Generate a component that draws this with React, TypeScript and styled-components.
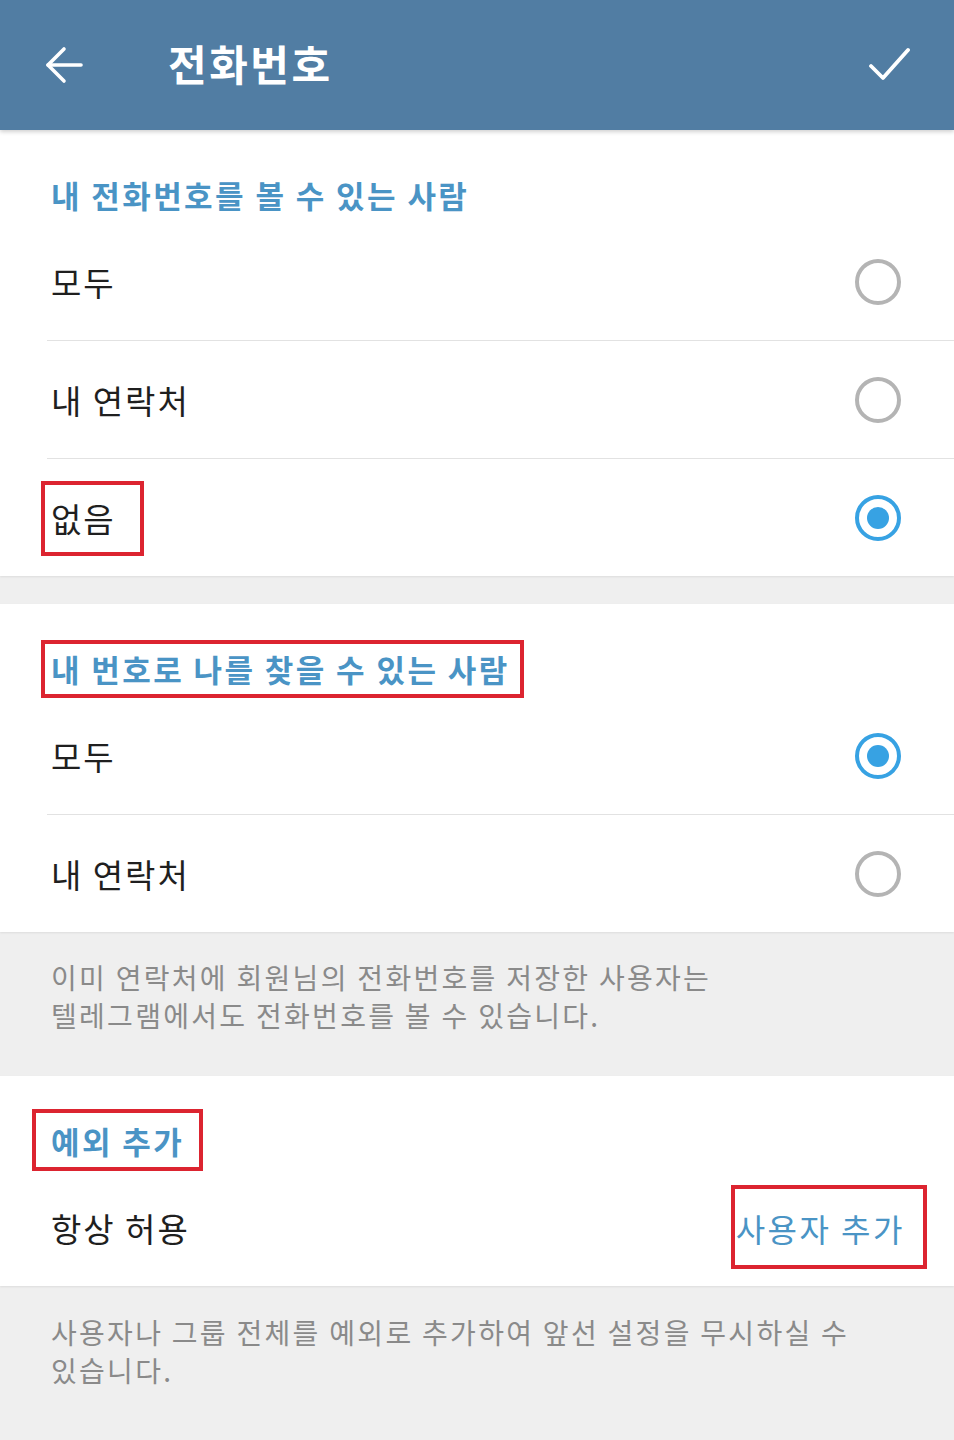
import React from "react";
import styled, { createGlobalStyle } from "styled-components";

const GlobalStyle = createGlobalStyle`
  html, body {
    margin: 0;
    padding: 0;
    background: #efefef;
  }
  body {
    font-family: "Noto Sans CJK KR", "Noto Sans", sans-serif;
  }
`;

const Page = styled.div`
  width: 954px;
  min-height: 1440px;
  background: #efefef;
  overflow: hidden;
`;

const TopBar = styled.header`
  height: 130px;
  background: #517da3;
  display: flex;
  align-items: center;
  padding: 0 44px 0 44px;
  box-sizing: border-box;
  box-shadow: 0 2px 4px rgba(0, 0, 0, 0.18);
  position: relative;
  z-index: 1;
`;

const Title = styled.h1`
  flex: 1;
  margin: 0 0 0 82px;
  color: #fff;
  font-size: 42px;
  font-weight: 700;
  letter-spacing: 2.5px;
  line-height: 1;
  padding-bottom: 4px;
`;

const IconButton = styled.span`
  display: flex;
  width: 42px;
  height: 42px;
`;

const Section = styled.section`
  background: #fff;
  box-shadow: 0 1px 2px rgba(0, 0, 0, 0.08);
`;

const SectionTitle = styled.div`
  padding: 43px 51px 6px;
  line-height: 44px;
  height: 44px;
  font-size: 31px;
  font-weight: 700;
  letter-spacing: 2.4px;
  color: #4a94c5;
`;

const Row = styled.div<{ $divider?: boolean }>`
  height: 117px;
  display: flex;
  align-items: center;
  justify-content: space-between;
  margin-left: 47px;
  padding: 0 53px 0 4px;
  border-bottom: ${(p) => (p.$divider ? "1px solid #e2e2e2" : "none")};
`;

const Label = styled.span`
  font-size: 33px;
  color: #1f1f1f;
  letter-spacing: 2px;
`;

const Action = styled.span`
  font-size: 32px;
  color: #4a94c5;
  letter-spacing: 2.5px;
  margin-right: -4px;
`;

const Radio = styled.span<{ $on?: boolean }>`
  width: 46px;
  height: 46px;
  box-sizing: border-box;
  border-radius: 50%;
  border: 4px solid ${(p) => (p.$on ? "#37a2e3" : "#b4b4b4")};
  display: flex;
  align-items: center;
  justify-content: center;
  &::after {
    content: "";
    width: 22px;
    height: 22px;
    border-radius: 50%;
    background: #37a2e3;
    display: ${(p) => (p.$on ? "block" : "none")};
  }
`;

const Gap = styled.div`
  height: 28px;
`;

const Info = styled.div<{ $pt: number; $pb: number }>`
  padding: ${(p) => p.$pt}px 51px ${(p) => p.$pb}px;
  font-size: 28px;
  line-height: 38px;
  color: #8a8a8a;
  letter-spacing: 2.3px;
`;

type Inset = [number, number, number, number];

const Marked = styled.span<{ $inset: Inset }>`
  position: relative;
  display: inline-block;
  &::after {
    content: "";
    position: absolute;
    top: ${(p) => -p.$inset[0]}px;
    right: ${(p) => -p.$inset[1]}px;
    bottom: ${(p) => -p.$inset[2]}px;
    left: ${(p) => -p.$inset[3]}px;
    border: 4px solid #dc2430;
    pointer-events: none;
  }
`;

function BackArrow() {
  return (
    <svg width="42" height="42" viewBox="0 0 42 42" fill="none" stroke="#fff" strokeWidth="3.6" strokeLinecap="round" strokeLinejoin="round">
      <path d="M37 21H4" />
      <path d="M20 5L4 21l16 16" />
    </svg>
  );
}

function CheckMark() {
  return (
    <svg width="42" height="42" viewBox="0 0 42 42" fill="none" stroke="#fff" strokeWidth="3.8" strokeLinecap="round" strokeLinejoin="round">
      <path d="M3 22l12 12L40 6" />
    </svg>
  );
}

export default function App() {
  return (
    <Page>
      <GlobalStyle />
      <TopBar>
        <IconButton>
          <BackArrow />
        </IconButton>
        <Title>전화번호</Title>
        <IconButton>
          <CheckMark />
        </IconButton>
      </TopBar>

      <Section>
        <SectionTitle>내 전화번호를 볼 수 있는 사람</SectionTitle>
        <Row $divider>
          <Label>모두</Label>
          <Radio />
        </Row>
        <Row $divider>
          <Label>내 연락처</Label>
          <Radio />
        </Row>
        <Row>
          <Label>
            <Marked $inset={[13, 28, 14, 10]}>없음</Marked>
          </Label>
          <Radio $on />
        </Row>
      </Section>

      <Gap />

      <Section>
        <SectionTitle>
          <Marked $inset={[7, 14, 7, 10]}>내 번호로 나를 찾을 수 있는 사람</Marked>
        </SectionTitle>
        <Row $divider>
          <Label>모두</Label>
          <Radio $on />
        </Row>
        <Row>
          <Label>내 연락처</Label>
          <Radio />
        </Row>
      </Section>

      <Info $pt={26} $pb={42}>
        이미 연락처에 회원님의 전화번호를 저장한 사용자는
        <br />
        텔레그램에서도 전화번호를 볼 수 있습니다.
      </Info>

      <Section>
        <SectionTitle>
          <Marked $inset={[10, 19, 8, 19]}>예외 추가</Marked>
        </SectionTitle>
        <Row>
          <Label>항상 허용</Label>
          <Action>
            <Marked $inset={[20, 22, 18, 5]}>사용자 추가</Marked>
          </Action>
        </Row>
      </Section>

      <Info $pt={27} $pb={40}>
        사용자나 그룹 전체를 예외로 추가하여 앞선 설정을 무시하실 수
        <br />
        있습니다.
      </Info>
    </Page>
  );
}
